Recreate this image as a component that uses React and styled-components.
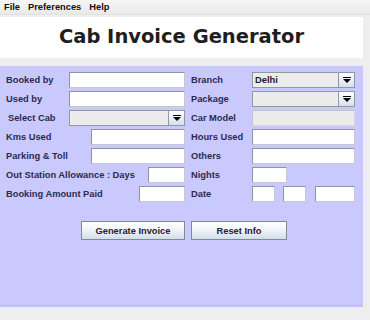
import React from "react";
import styled, { createGlobalStyle } from "styled-components";

const GlobalStyle = createGlobalStyle`
  html, body { margin: 0; padding: 0; background: #eeeeee; }
  body { font-family: "Liberation Sans", Arial, sans-serif; }
`;

const Frame = styled.div`
  width: 370px;
  height: 320px;
  display: flex;
  flex-direction: column;
  background: #eeeeee;
  overflow: hidden;
`;

const MenuBar = styled.div`
  height: 14px;
  display: flex;
  align-items: center;
  gap: 8px;
  padding-left: 4px;
  background: linear-gradient(#f6f6f6, #e9e9e9);
  border-bottom: 1px solid #e2e2e2;
  font-size: 9.3px;
  font-weight: bold;
  color: #111;
`;

const MenuItem = styled.span`
  margin-right: ${(p) => p.$gap || 0}px;
`;

const TitlePanel = styled.div`
  margin-top: 2px;
  width: 363px;
  height: 41px;
  background: #ffffff;
  display: flex;
  align-items: center;
  justify-content: center;
`;

const Title = styled.h1`
  margin: 0 0 3px 0;
  font-family: "DejaVu Sans", Verdana, sans-serif;
  font-weight: bold;
  font-size: 19.5px;
  color: #1e1e22;
  letter-spacing: 0;
`;

const FormPanel = styled.div`
  margin-top: 8px;
  width: 363px;
  height: 241px;
  box-sizing: border-box;
  background: #c9c9fe;
  border-bottom: 3px solid #c2c2f6;
  padding: 6px 0 0 6px;
  display: flex;
  flex-direction: column;
  gap: 3px;
`;

const Row = styled.div`
  display: flex;
  height: 16px;
  align-items: center;
`;

const LeftHalf = styled.div`
  width: 179px;
  display: flex;
  align-items: center;
  justify-content: space-between;
`;

const RightHalf = styled.div`
  margin-left: 6px;
  display: flex;
  align-items: center;
`;

const Label = styled.span`
  font-size: 9.3px;
  font-weight: bold;
  color: #2b2b50;
  white-space: nowrap;
  padding-left: ${(p) => p.$indent || 0}px;
  width: ${(p) => (p.$w ? p.$w + "px" : "auto")};
`;

const FieldGroup = styled.div`
  display: flex;
  align-items: center;
`;

const TextField = styled.div`
  box-sizing: border-box;
  width: ${(p) => p.$w}px;
  height: 16px;
  margin-left: ${(p) => p.$ml || 0}px;
  background: ${(p) => (p.$disabled ? "#ebebeb" : "#ffffff")};
  border: 1px solid ${(p) => (p.$disabled ? "#c4c4cc" : "#8f93a3")};
  border-right-color: ${(p) => (p.$disabled ? "#d6d6dc" : "#c8c8d4")};
  border-bottom-color: ${(p) => (p.$disabled ? "#d6d6dc" : "#c8c8d4")};
`;

const Combo = styled.div`
  box-sizing: border-box;
  width: ${(p) => p.$w}px;
  height: 16px;
  display: flex;
  background: #ececec;
  border: 1px solid #8e98a6;
`;

const ComboText = styled.span`
  flex: 1;
  font-size: 9.3px;
  font-weight: bold;
  color: #1a1a30;
  padding-left: 2px;
  line-height: 14px;
`;

const ComboArrow = styled.div`
  width: 15px;
  border-left: 1px solid #8e98a6;
  background: linear-gradient(#ffffff, #d6e0ea);
  display: flex;
  align-items: center;
  justify-content: center;
`;

const ButtonRow = styled.div`
  display: flex;
  gap: 6px;
  margin-top: 16px;
  padding-left: 75px;
`;

const Button = styled.button`
  box-sizing: border-box;
  width: ${(p) => p.$w}px;
  height: 19px;
  padding: 0;
  border: 1px solid #7d8a99;
  background: linear-gradient(#ffffff 0%, #f2f5f8 45%, #d3dde8 100%);
  font-family: "Liberation Sans", Arial, sans-serif;
  font-size: 9.3px;
  font-weight: bold;
  color: #222233;
`;

const Arrow = () => (
  <svg width="8" height="6" viewBox="0 0 8 6">
    <rect x="0" y="0" width="8" height="1" fill="#000" />
    <polygon points="0,2 8,2 4,6" fill="#000" />
  </svg>
);

const ComboBox = ({ w, value }) => (
  <Combo $w={w}>
    <ComboText>{value}</ComboText>
    <ComboArrow>
      <Arrow />
    </ComboArrow>
  </Combo>
);

export default function App() {
  return (
    <>
      <GlobalStyle />
      <Frame>
        <MenuBar>
          <MenuItem>File</MenuItem>
          <MenuItem>Preferences</MenuItem>
          <MenuItem>Help</MenuItem>
        </MenuBar>
        <TitlePanel>
          <Title>Cab Invoice Generator</Title>
        </TitlePanel>
        <FormPanel>
          <Row>
            <LeftHalf>
              <Label>Booked by</Label>
              <TextField $w={116} />
            </LeftHalf>
            <RightHalf>
              <Label $w={61}>Branch</Label>
              <ComboBox w={103} value="Delhi" />
            </RightHalf>
          </Row>
          <Row>
            <LeftHalf>
              <Label>Used by</Label>
              <TextField $w={116} />
            </LeftHalf>
            <RightHalf>
              <Label $w={61}>Package</Label>
              <ComboBox w={103} value="" />
            </RightHalf>
          </Row>
          <Row>
            <LeftHalf>
              <Label $indent={2}>Select Cab</Label>
              <ComboBox w={116} value="" />
            </LeftHalf>
            <RightHalf>
              <Label $w={61}>Car Model</Label>
              <TextField $w={103} $disabled />
            </RightHalf>
          </Row>
          <Row>
            <LeftHalf>
              <Label>Kms Used</Label>
              <TextField $w={94} />
            </LeftHalf>
            <RightHalf>
              <Label $w={61}>Hours Used</Label>
              <TextField $w={103} />
            </RightHalf>
          </Row>
          <Row>
            <LeftHalf>
              <Label>Parking &amp; Toll</Label>
              <TextField $w={94} />
            </LeftHalf>
            <RightHalf>
              <Label $w={61}>Others</Label>
              <TextField $w={103} />
            </RightHalf>
          </Row>
          <Row>
            <LeftHalf>
              <Label>Out Station Allowance : Days</Label>
              <TextField $w={37} />
            </LeftHalf>
            <RightHalf>
              <Label $w={61}>Nights</Label>
              <TextField $w={35} />
            </RightHalf>
          </Row>
          <Row>
            <LeftHalf>
              <Label>Booking Amount Paid</Label>
              <TextField $w={46} />
            </LeftHalf>
            <RightHalf>
              <Label $w={61}>Date</Label>
              <FieldGroup>
                <TextField $w={23} />
                <TextField $w={23} $ml={8} />
                <TextField $w={40} $ml={9} />
              </FieldGroup>
            </RightHalf>
          </Row>
          <ButtonRow>
            <Button $w={104}>Generate Invoice</Button>
            <Button $w={96}>Reset Info</Button>
          </ButtonRow>
        </FormPanel>
      </Frame>
    </>
  );
}
